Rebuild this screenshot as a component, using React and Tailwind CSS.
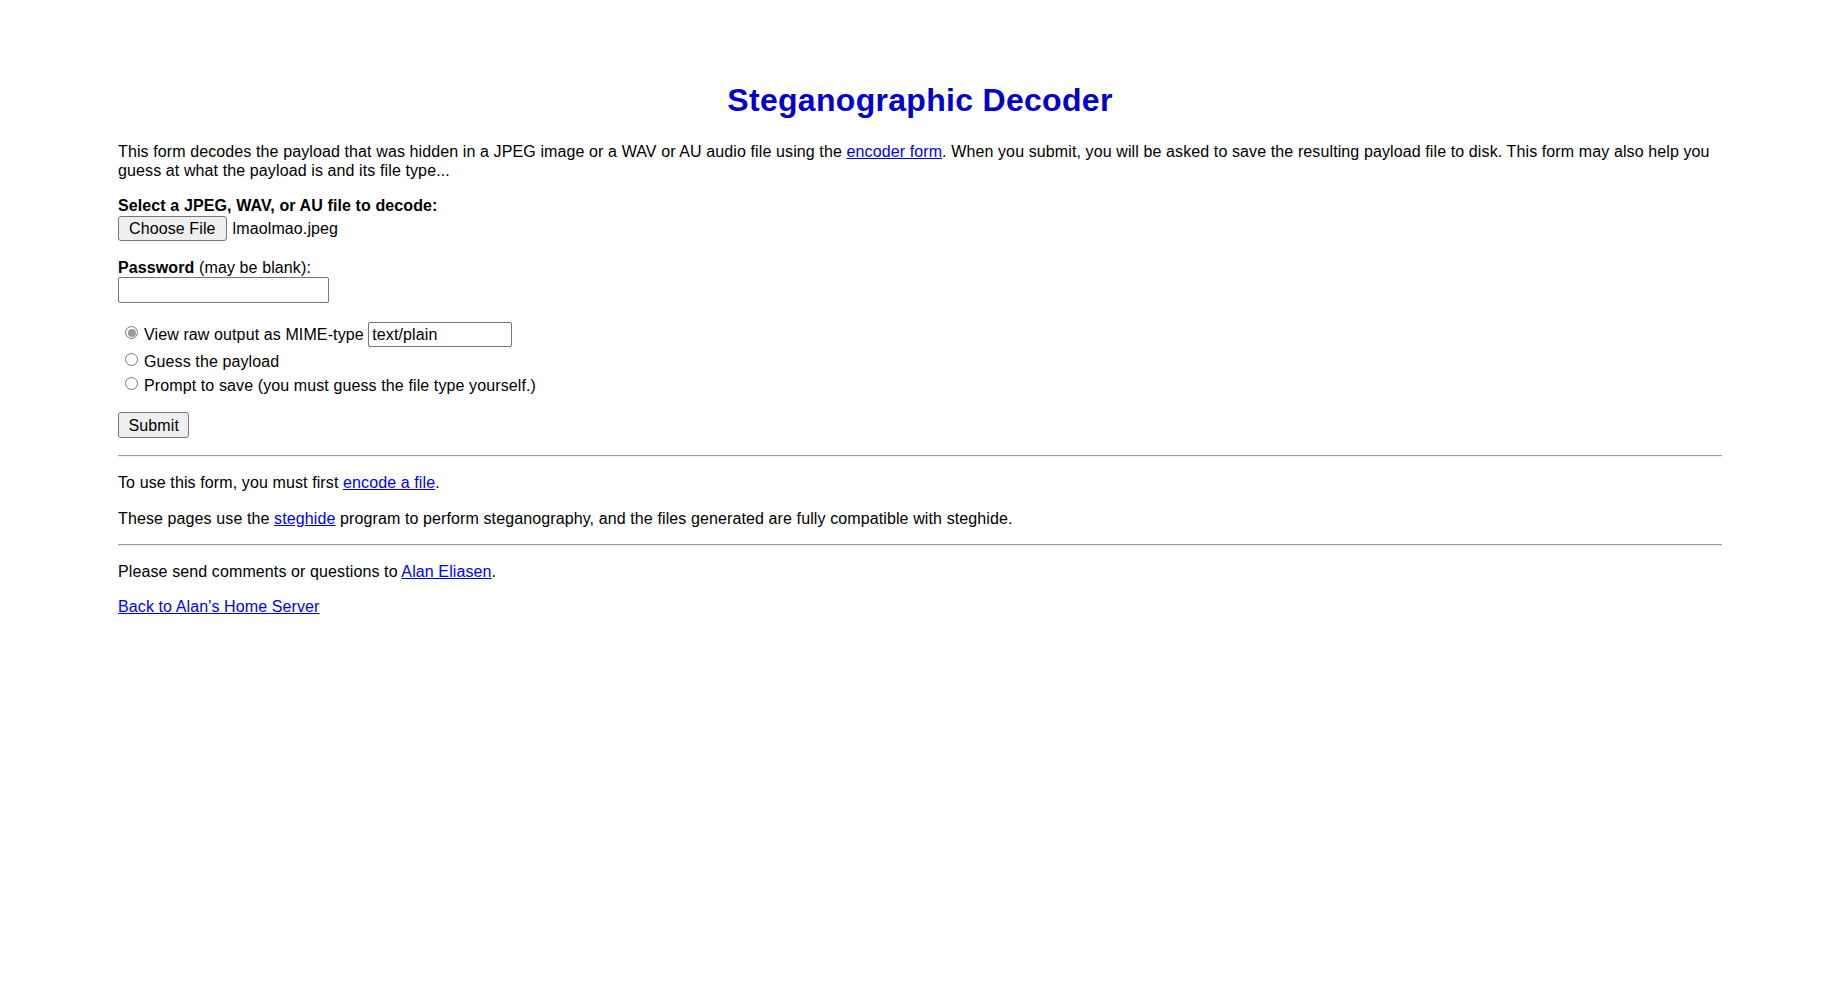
import React from "react";

function Radio({ checked }) {
  return (
    <span className="mb-[4px] ml-[7px] flex h-[13px] w-[13px] shrink-0 items-center justify-center rounded-full border border-[#767676] bg-white">
      {checked && <span className="h-[8px] w-[8px] rounded-full bg-[#9a9a9a]" />}
    </span>
  );
}

function Link({ children }) {
  return (
    <a href="#" className="text-[#0000ee] underline">
      {children}
    </a>
  );
}

export default function App() {
  return (
    <div className="min-h-screen bg-white px-[118px] pt-[82px] font-['Liberation_Sans',Arial,sans-serif] text-[16px] leading-[19px] tracking-[0.11px] text-black">
      <h1 className="text-center text-[32px] font-bold leading-[37px] tracking-[0.3px] text-[#0000cc]">
        Steganographic Decoder
      </h1>

      <p className="mt-[23px]">
        This form decodes the payload that was hidden in a JPEG image or a WAV or AU audio file using the{" "}
        <Link>encoder form</Link>. When you submit, you will be asked to save the resulting payload file to disk. This
        form may also help you guess at what the payload is and its file type...
      </p>

      <form className="mt-[16px]" onSubmit={(e) => e.preventDefault()}>
        <div className="font-bold">Select a JPEG, WAV, or AU file to decode:</div>
        <div className="mt-[1px] flex items-center gap-[6px]">
          <button type="button" className="h-[25px] rounded-[3px] border border-[#767676] bg-[#efefef] px-[10px]">
            Choose File
          </button>
          <span>lmaolmao.jpeg</span>
        </div>

        <div className="mt-[17px]">
          <b>Password</b> (may be blank):
        </div>
        <input
          type="password"
          className="block h-[26px] w-[211px] rounded-[2px] border border-[#767676] bg-white px-[3px]"
        />

        <div className="mt-[19px] flex h-[25px] items-center">
          <Radio checked />
          <span className="ml-[6px]">View raw output as MIME-type</span>
          <input
            type="text"
            readOnly
            defaultValue="text/plain"
            className="ml-[4.5px] h-[25px] w-[144px] rounded-[2px] border border-[#767676] bg-white px-[3px] outline-none"
          />
        </div>
        <div className="mt-[2px] flex h-[24.5px] items-center">
          <Radio />
          <span className="ml-[6px]">Guess the payload</span>
        </div>
        <div className="flex h-[24.5px] items-center">
          <Radio />
          <span className="ml-[6px]">Prompt to save (you must guess the file type yourself.)</span>
        </div>

        <button type="submit" className="mt-[14px] h-[26px] rounded-[3px] border border-[#767676] bg-[#efefef] px-[9.5px]">
          Submit
        </button>
      </form>

      <hr className="mt-[17px] border-t border-b border-t-[#9a9a9a] border-b-[#eeeeee]" />

      <p className="mt-[16px]">
        To use this form, you must first <Link>encode a file</Link>.
      </p>
      <p className="mt-[17px]">
        These pages use the <Link>steghide</Link> program to perform steganography, and the files generated are fully
        compatible with steghide.
      </p>

      <hr className="mt-[16px] border-t border-b border-t-[#9a9a9a] border-b-[#eeeeee]" />

      <p className="mt-[16px]">
        Please send comments or questions to <Link>Alan Eliasen</Link>.
      </p>
      <p className="mt-[16px]">
        <Link>Back to Alan's Home Server</Link>
      </p>
    </div>
  );
}
